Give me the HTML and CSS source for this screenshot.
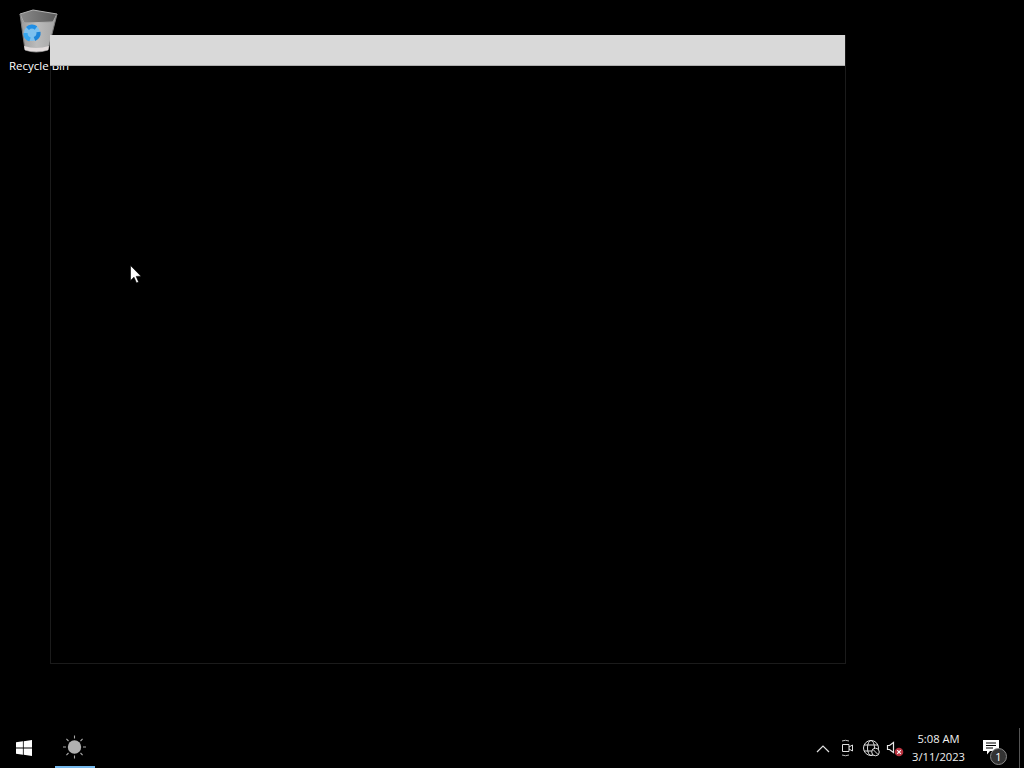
FILE: index.html
```html
<!DOCTYPE html>
<html lang="en">
<head>
<meta charset="utf-8">
<title>Desktop</title>
<link rel="stylesheet" href="styles.css">
</head>
<body>
<main class="desktop">
  <div class="desktop-icon">
    <svg class="bin" width="42" height="44" viewBox="0 0 42 44">
      <defs>
        <linearGradient id="binBody" x1="0" y1="0" x2="1" y2="0">
          <stop offset="0" stop-color="#9a9a9a"/>
          <stop offset="0.45" stop-color="#bcbcbc"/>
          <stop offset="1" stop-color="#a4a4a4"/>
        </linearGradient>
        <linearGradient id="binLid" x1="0" y1="0" x2="1" y2="0">
          <stop offset="0" stop-color="#8a8a8a"/>
          <stop offset="1" stop-color="#5a5a5a"/>
        </linearGradient>
      </defs>
      <path d="M2 5 L15 1 L39 5 L35 13 L6 14 Z" fill="url(#binLid)" stroke="#b5b5b5"/>
      <path d="M2 5 L6 14 L35 13 L39 5 L30 41 Q18 45 7 41 Z" fill="url(#binBody)"/>
      <path d="M2 5 L7 41 Q18 45 30 41 L39 5" fill="none" stroke="#7d7d7d"/>
      <path d="M7 41 Q18 44 30 41 L31 37 Q18 41 6 37 Z" fill="#e2dcdc"/>
      <circle cx="14" cy="24" r="8" fill="#7cc0ee"/>
      <g fill="none" stroke-width="4.2">
        <path d="M9.5 19.5 A6.5 6.5 0 0 1 18 19" stroke="#1f8fe6"/>
        <path d="M20.5 23 A6.5 6.5 0 0 1 16.5 30" stroke="#1c84d8"/>
        <path d="M12 30.5 A6.5 6.5 0 0 1 7.5 24" stroke="#36a6ee"/>
      </g>
    </svg>
    <span class="icon-label">Recycle Bin</span>
  </div>

  <section class="window">
    <div class="titlebar"></div>
  </section>

  <svg class="cursor" width="12" height="19" viewBox="0 0 12 19">
    <path d="M0.5 0.5 L0.5 15.5 L4 12.2 L6.5 18 L8.6 17 L6.2 11.4 L11 11.2 Z" fill="#fff" stroke="#000" stroke-width="0.6"/>
  </svg>
</main>

<footer class="taskbar">
  <div class="start">
    <svg width="16" height="16" viewBox="0 0 16 16">
      <path d="M0 2.3 L6.9 1.3 V7.6 H0 Z M7.7 1.2 L16 0 V7.6 H7.7 Z M0 8.4 H6.9 V14.7 L0 13.7 Z M7.7 8.4 H16 V16 L7.7 14.8 Z" fill="#fff"/>
    </svg>
  </div>
  <div class="task active">
    <svg width="26" height="26" viewBox="0 0 26 26">
      <circle cx="12.5" cy="13" r="6.7" fill="#b0b0b0"/>
      <path d="M12.5 1.5 V4.5 M12.5 21.5 V24.5 M1 13 H4 M21 13 H24 M4.4 4.9 L6.5 7 M18.5 19 L20.6 21.1 M4.4 21.1 L6.5 19 M18.5 7 L20.6 4.9" stroke="#a8a8a8" stroke-width="1.1" fill="none"/>
    </svg>
  </div>

  <div class="tray">
    <div class="tray-cell">
      <svg width="16" height="16" viewBox="0 0 16 16">
        <path d="M2 12 L8 6 L14 12" fill="none" stroke="#e0e0e0" stroke-width="1.2"/>
      </svg>
    </div>
    <div class="tray-cell">
      <svg width="16" height="18" viewBox="0 0 16 18">
        <path d="M3.5 5.5 H10 V12.5 H3.5 Z M10 8 L13.5 6 V12 L10 10" fill="none" stroke="#e0e0e0"/>
        <path d="M3 2 Q6.5 0.5 10 2 M3 16 Q6.5 17.5 10 16" fill="none" stroke="#bdbdbd"/>
      </svg>
    </div>
    <div class="tray-cell">
      <svg width="18" height="18" viewBox="0 0 18 18">
        <g fill="none" stroke="#e0e0e0">
          <circle cx="9" cy="9" r="7.5"/>
          <ellipse cx="9" cy="9" rx="3.5" ry="7.5"/>
          <path d="M2 6 H16 M2 12 H10"/>
        </g>
        <circle cx="13.5" cy="13" r="3.8" fill="#000" stroke="#e0e0e0"/>
        <path d="M11 10.5 L16 15.5" stroke="#e0e0e0"/>
      </svg>
    </div>
    <div class="tray-cell">
      <svg width="18" height="18" viewBox="0 0 18 18">
        <path d="M1.5 6.5 H3.5 L7.5 3.5 V13.5 L3.5 10.5 H1.5 Z" fill="none" stroke="#e8e8e8" stroke-width="1.2"/>
        <circle cx="13" cy="13" r="4.3" fill="#b8323f"/>
        <path d="M11.2 11.2 L14.8 14.8 M14.8 11.2 L11.2 14.8" stroke="#fff" stroke-width="1.1"/>
      </svg>
    </div>
  </div>

  <div class="clock">
    <span>5:08 AM</span>
    <span>3/11/2023</span>
  </div>

  <div class="notify">
    <svg width="16" height="15" viewBox="0 0 16 15">
      <path d="M0 0 H16 V11 H7 L4 14.5 V11 H0 Z" fill="#fff"/>
      <path d="M3 3 H13 M3 5.5 H13 M3 8 H10" stroke="#000"/>
    </svg>
    <span class="badge">1</span>
  </div>
  <div class="show-desktop"></div>
</footer>
</body>
</html>
```
FILE: styles.css
```css
* { box-sizing: border-box; }

html, body {
  margin: 0;
  height: 100%;
  background: #000;
  overflow: hidden;
}

body {
  display: flex;
  flex-direction: column;
  height: 768px;
  font-family: "Open Sans", "Noto Sans", "Liberation Sans", sans-serif;
  color: #fff;
}

.desktop {
  position: relative;
  flex: 1;
}

.desktop-icon {
  position: absolute;
  left: 4px;
  top: 9px;
  width: 70px;
  display: flex;
  flex-direction: column;
  align-items: center;
}

.bin { display: block; }

.icon-label {
  font-size: 11.5px;
  line-height: 16px;
  margin-top: 5px;
  white-space: nowrap;
  color: #fff;
}

.window {
  position: absolute;
  left: 50px;
  top: 35px;
  width: 796px;
  height: 629px;
  border: 1px solid #1b1b1b;
  border-top: 0;
}

.titlebar {
  height: 31px;
  margin-left: -1px;
  background: #d9d9d9;
  border-bottom: 1px solid #b0b0b0;
}

.cursor {
  position: absolute;
  left: 130px;
  top: 265px;
}

.taskbar {
  height: 40px;
  display: flex;
  align-items: center;
  background: #000;
  flex: none;
}

.start {
  width: 48px;
  height: 40px;
  display: flex;
  align-items: center;
  justify-content: center;
}

.task {
  width: 40px;
  height: 40px;
  margin-left: 7px;
  display: flex;
  align-items: center;
  justify-content: center;
}

.task.active {
  border-bottom: 2px solid #76b9ed;
}

.tray {
  margin-left: auto;
  display: flex;
  align-items: center;
}

.tray-cell {
  width: 24px;
  height: 40px;
  display: flex;
  align-items: center;
  justify-content: center;
}

.clock {
  width: 63px;
  display: flex;
  flex-direction: column;
  align-items: center;
  font-size: 11.2px;
  line-height: 18px;
  color: #f0f0f0;
}

.notify {
  position: relative;
  width: 24px;
  height: 24px;
  margin-left: 13px;
  padding-top: 4px;
}

.notify svg { display: block; }

.badge {
  position: absolute;
  left: 7px;
  top: 12px;
  width: 17px;
  height: 17px;
  border-radius: 50%;
  background: #333;
  border: 1px solid #888;
  font-size: 11px;
  line-height: 15px;
  text-align: center;
}

.show-desktop {
  width: 1px;
  height: 40px;
  margin-left: 12px;
  margin-right: 4px;
  background: #555;
}
```
